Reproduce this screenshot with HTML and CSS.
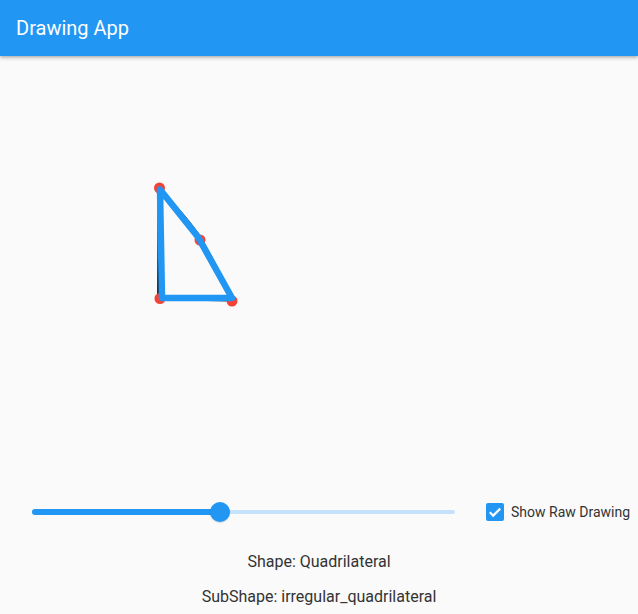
FILE: index.html
```html
<!DOCTYPE html>
<html>
<head>
<meta charset="utf-8">
<link rel="stylesheet" href="styles.css">
</head>
<body>
<div class="app">
  <header class="appbar"><span class="title">Drawing App</span></header>
  <main class="canvas">
    <svg class="drawing" width="638" height="424" viewBox="0 56 638 424">
      <path d="M158.5 190 L158 299 L231 300.5 M161 189 C180 212 195 226 203 242 C215 262 224 282 233 299" fill="none" stroke="#111" stroke-width="1.8" stroke-linecap="round" stroke-linejoin="round"/>
      <circle cx="159.5" cy="188" r="5.5" fill="#f44336"/>
      <circle cx="200" cy="240" r="5.5" fill="#f44336"/>
      <circle cx="160" cy="298.5" r="5.5" fill="#f44336"/>
      <circle cx="232" cy="301" r="5.5" fill="#f44336"/>
      <path d="M160 189.5 L198 237 L232 298 L162 298 Z" fill="none" stroke="#2196F3" stroke-width="6.5" stroke-linejoin="round" stroke-linecap="round"/>
    </svg>
  </main>
  <section class="controls">
    <div class="slider">
      <div class="track-inactive"></div>
      <div class="track-active" style="width: 188px"></div>
      <div class="thumb" style="left: 188px"></div>
    </div>
    <label class="check">
      <span class="box">
        <svg width="18" height="18" viewBox="0 0 18 18"><path d="M3.8 9.2 L7.2 12.6 L14.2 5.6" fill="none" stroke="#fff" stroke-width="2.2"/></svg>
      </span>
      <span class="check-label">Show Raw Drawing</span>
    </label>
  </section>
  <p class="info">Shape: Quadrilateral</p>
  <p class="info">SubShape: irregular_quadrilateral</p>
</div>
</body>
</html>
```
FILE: styles.css
```css
html, body {
  margin: 0;
  padding: 0;
  background: #fafafa;
  font-family: Roboto, "Noto Sans", sans-serif;
}
.app {
  width: 638px;
  height: 614px;
  display: flex;
  flex-direction: column;
  overflow: hidden;
}
.appbar {
  height: 56px;
  flex: 0 0 56px;
  background: #2196F3;
  box-shadow: 0 2px 4px rgba(0,0,0,0.22), 0 1px 2px rgba(0,0,0,0.12);
  display: flex;
  align-items: center;
  padding-left: 16px;
  position: relative;
  z-index: 1;
}
.title {
  color: #fff;
  font-size: 20px;
  font-weight: 400;
}
.canvas {
  flex: 1 1 auto;
  min-height: 0;
}
.drawing {
  display: block;
}
.controls {
  flex: 0 0 64px;
  height: 64px;
  display: flex;
  align-items: center;
  padding-left: 32px;
}
.slider {
  position: relative;
  width: 423px;
  height: 20px;
}
.track-inactive {
  position: absolute;
  left: 0;
  right: 0;
  top: 8px;
  height: 4px;
  border-radius: 2px;
  background: #c4e2fb;
}
.track-active {
  position: absolute;
  left: 0;
  top: 7px;
  height: 6px;
  border-radius: 3px;
  background: #2196F3;
}
.thumb {
  position: absolute;
  top: 0;
  width: 20px;
  height: 20px;
  margin-left: -10px;
  border-radius: 50%;
  background: #2196F3;
  box-shadow: 0 1px 1px rgba(0,0,0,0.15);
}
.check {
  display: flex;
  align-items: center;
  margin-left: 31px;
}
.box {
  width: 18px;
  height: 18px;
  border-radius: 2px;
  background: #2196F3;
  display: block;
}
.box svg {
  display: block;
}
.check-label {
  margin-left: 7px;
  font-size: 14px;
  color: #333;
}
.info {
  margin: 0;
  padding: 8px 0;
  line-height: 19px;
  font-size: 16px;
  text-align: center;
  color: #333;
}
```
